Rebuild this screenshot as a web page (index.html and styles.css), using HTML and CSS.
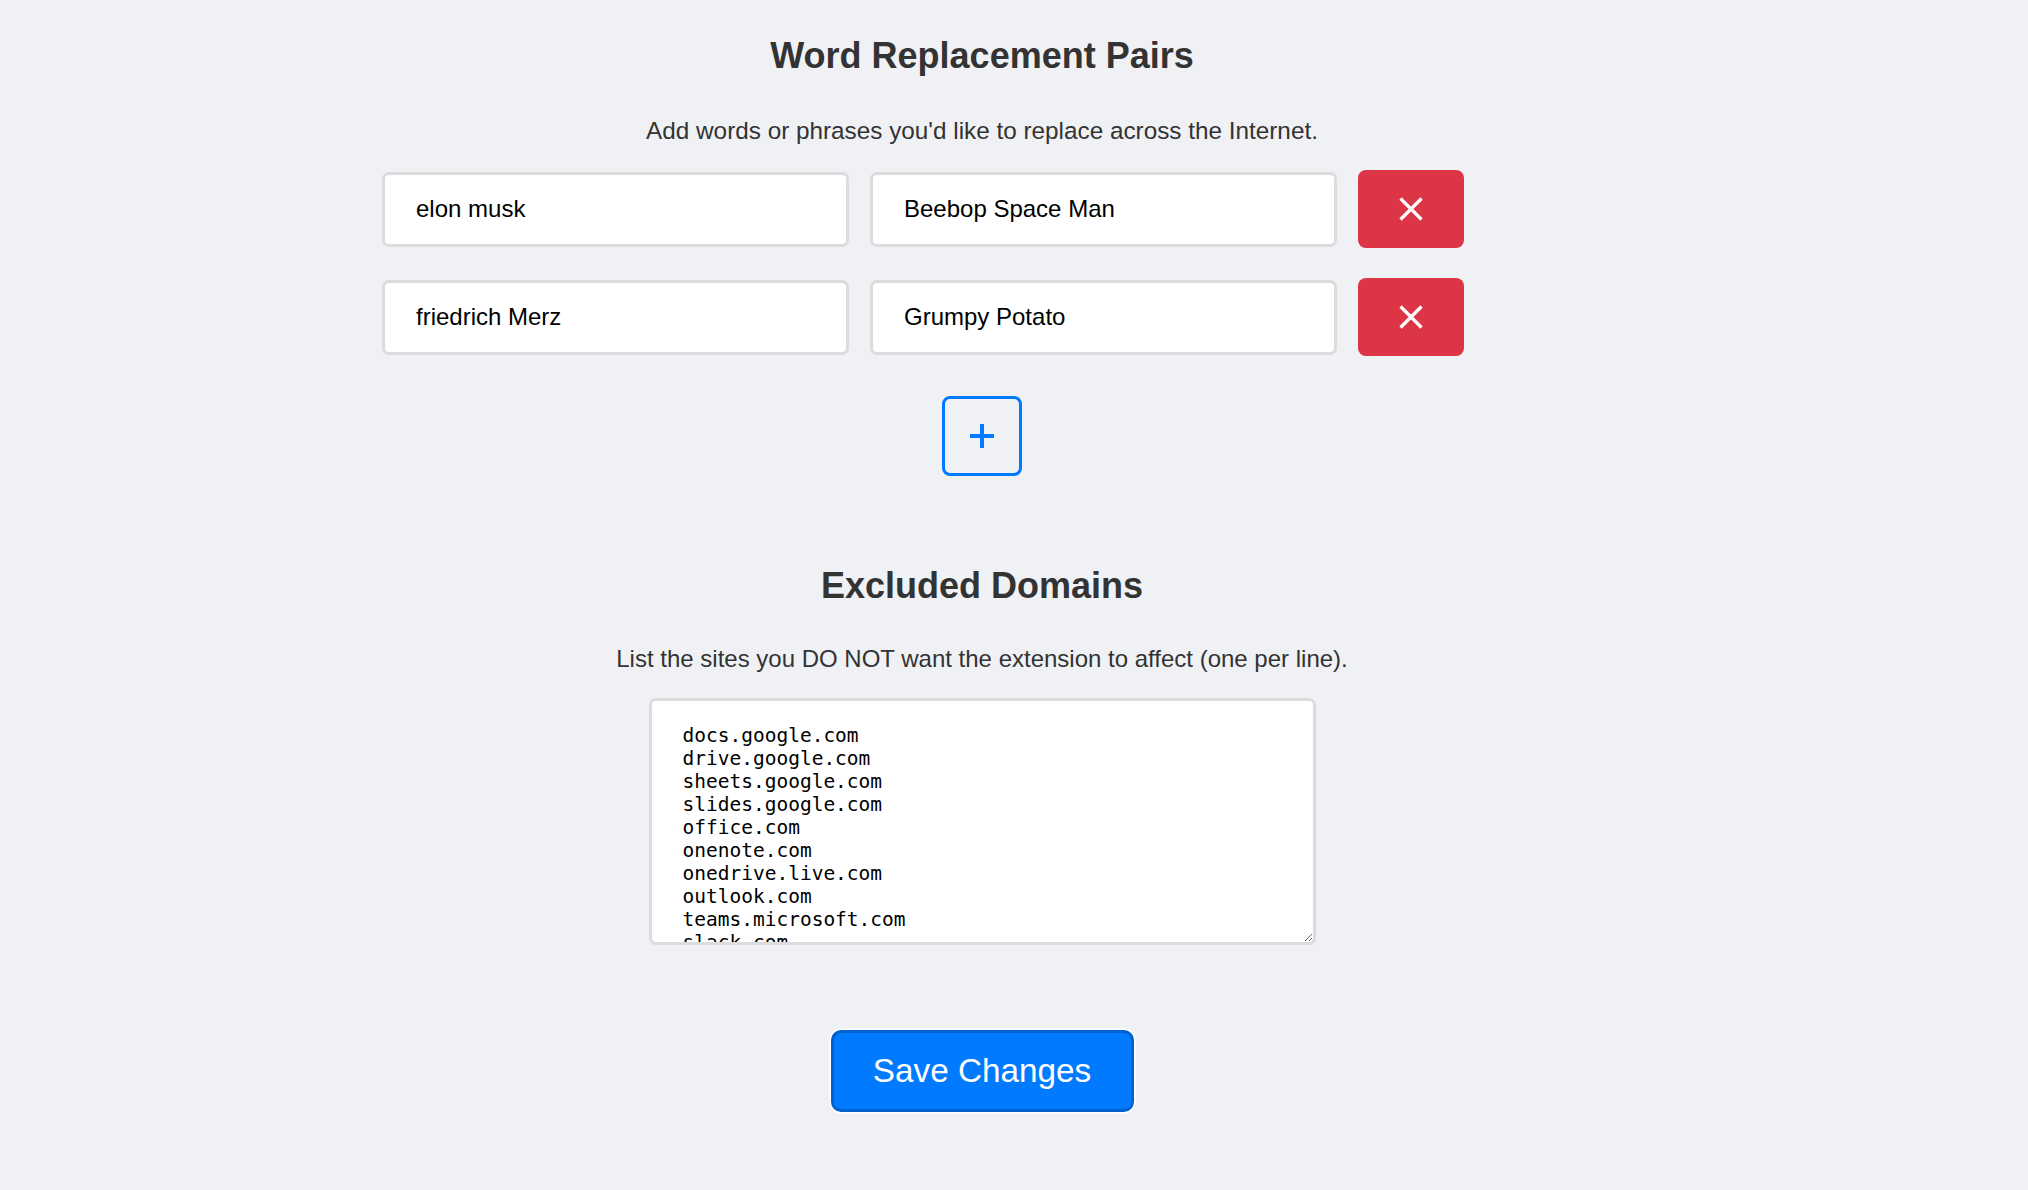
FILE: index.html
```html
<!DOCTYPE html>
<html lang="en">
<head>
<meta charset="utf-8">
<title>Options</title>
<link rel="stylesheet" href="styles.css">
</head>
<body>
<main class="page">
  <h2 class="title">Word Replacement Pairs</h2>
  <p class="hint hint-pairs">Add words or phrases you'd like to replace across the Internet.</p>

  <div class="pairs">
    <div class="pair">
      <input class="field" type="text" value="elon musk">
      <input class="field" type="text" value="Beebop Space Man">
      <button class="remove" type="button" aria-label="Remove">
        <svg width="24" height="24" viewBox="0 0 24 24"><path d="M1.5 1.5L22.5 22.5M22.5 1.5L1.5 22.5" stroke="#fff" stroke-width="3.2" fill="none"/></svg>
      </button>
    </div>
    <div class="pair">
      <input class="field" type="text" value="friedrich Merz">
      <input class="field" type="text" value="Grumpy Potato">
      <button class="remove" type="button" aria-label="Remove">
        <svg width="24" height="24" viewBox="0 0 24 24"><path d="M1.5 1.5L22.5 22.5M22.5 1.5L1.5 22.5" stroke="#fff" stroke-width="3.2" fill="none"/></svg>
      </button>
    </div>
  </div>

  <button class="add" type="button" aria-label="Add pair">
    <svg width="24" height="24" viewBox="0 0 24 24"><path d="M12 0V24M0 12H24" stroke="#007bff" stroke-width="4" fill="none"/></svg>
  </button>

  <h2 class="title title-domains">Excluded Domains</h2>
  <p class="hint hint-domains">List the sites you DO NOT want the extension to affect (one per line).</p>

  <textarea class="domains" spellcheck="false">docs.google.com
drive.google.com
sheets.google.com
slides.google.com
office.com
onenote.com
onedrive.live.com
outlook.com
teams.microsoft.com
slack.com
zoom.us</textarea>

  <button class="save" type="button">Save Changes</button>
</main>
</body>
</html>
```

FILE: styles.css
```css
html, body {
  margin: 0;
  padding: 0;
}

body {
  background: #f0f1f5;
  font-family: "Liberation Sans", Arial, Helvetica, sans-serif;
  color: #333;
}

.page {
  width: 1200px;
  margin-left: 382px;
  padding-top: 35px;
  padding-bottom: 60px;
  display: flex;
  flex-direction: column;
  align-items: center;
}

.title {
  margin: 0;
  font-size: 36px;
  font-weight: bold;
  color: #333;
  line-height: 41px;
}

.title-domains {
  margin-top: 89px;
}

.hint {
  margin: 41px 0 0;
  font-size: 24px;
  line-height: 28px;
  color: #333;
}

.hint-pairs {
  font-size: 24.3px;
}

.hint-domains {
  margin-top: 39px;
}

.pairs {
  align-self: flex-start;
  margin-top: 25px;
  display: flex;
  flex-direction: column;
  gap: 30px;
}

.pair {
  display: flex;
  align-items: center;
  gap: 21px;
}

.field {
  box-sizing: border-box;
  width: 467px;
  height: 75px;
  border: 3px solid #dcdcdc;
  border-radius: 7px;
  background: #fff;
  padding: 0 31px;
  font-family: "Liberation Sans", Arial, Helvetica, sans-serif;
  font-size: 24px;
  color: #000;
  outline: none;
}

.remove {
  width: 106px;
  height: 78px;
  border: none;
  border-radius: 8px;
  background: #dc3545;
  padding: 0;
  display: flex;
  align-items: center;
  justify-content: center;
  cursor: pointer;
}

.add {
  margin-top: 40px;
  box-sizing: border-box;
  width: 80px;
  height: 80px;
  border: 3px solid #007bff;
  border-radius: 8px;
  background: transparent;
  padding: 0;
  display: flex;
  align-items: center;
  justify-content: center;
  cursor: pointer;
}

.domains {
  box-sizing: border-box;
  margin-top: 25px;
  width: 667px;
  height: 247px;
  border: 3px solid #dcdcdc;
  border-radius: 7px;
  background: #fff;
  padding: 22.5px 31px 10px;
  font-family: "DejaVu Sans Mono", "Liberation Mono", monospace;
  font-size: 19.5px;
  line-height: 23.1px;
  color: #000;
  overflow: hidden;
  resize: vertical;
  outline: none;
}

.save {
  margin-top: 85px;
  box-sizing: border-box;
  width: 303px;
  height: 82px;
  border: 3px solid #0062cc;
  border-radius: 10px;
  background: #007bff;
  box-shadow: 0 0 0 1.5px #fff;
  color: #fff;
  font-family: "Liberation Sans", Arial, Helvetica, sans-serif;
  font-size: 33.3px;
  padding: 0;
  cursor: pointer;
}
```
